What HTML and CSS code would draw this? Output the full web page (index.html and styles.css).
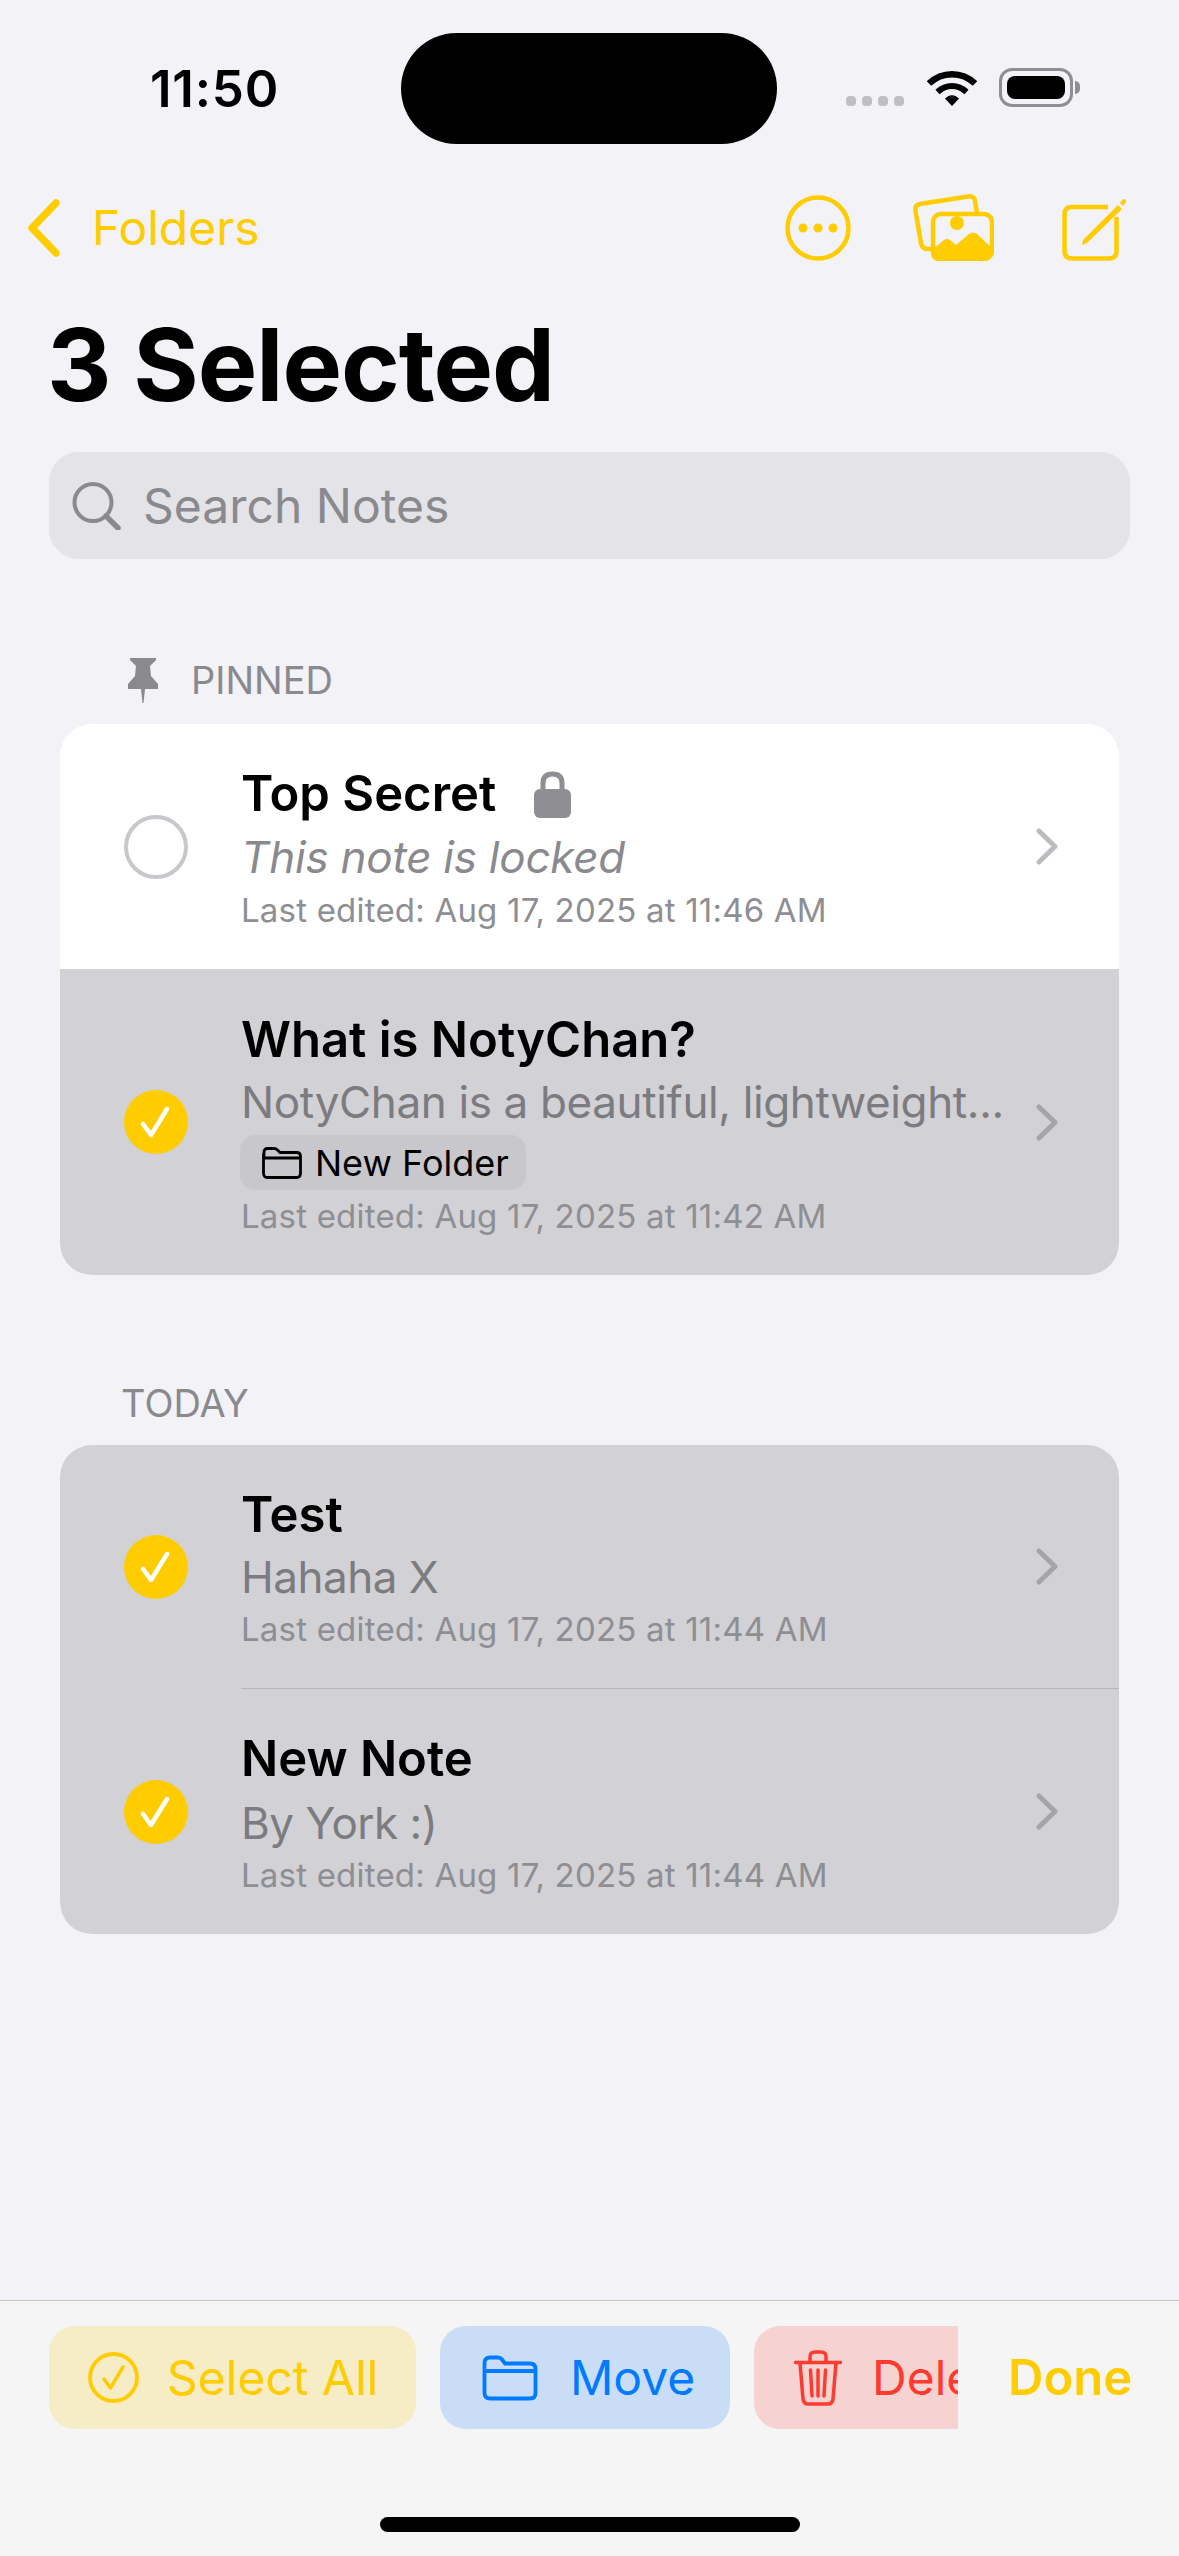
FILE: index.html
```html
<!DOCTYPE html>
<html lang="en">
<head>
  <meta charset="UTF-8" />
  <title>Notes – 3 Selected</title>
  <link rel="stylesheet" href="styles.css">
</head>
<body>
  <div class="screen">
    <div class="status">
      <div class="time">11:50</div>
      <div class="island"></div>
      <div class="status-icons">
        <div class="dots"><i></i><i></i><i></i><i></i></div>
        <svg class="wifi" viewBox="0 0 50 37"><path d="M2 14.5C15 2 35 2 48 14.5" fill="none" stroke="#000" stroke-width="6.5"/><path d="M10.5 23C19 15 31 15 39.5 23" fill="none" stroke="#000" stroke-width="6"/><path d="M18 29.5C22.5 25 27.5 25 32 29.5L25 37Z" fill="#000"/></svg>
        <div class="battery"><div class="battery-fill"></div></div>
        <div class="battery-cap"></div>
      </div>
    </div>

    <div class="nav">
      <svg class="back" viewBox="0 0 33 58"><path d="M29 4L5 29L29 54" fill="none" stroke="#ffcc00" stroke-width="7.5" stroke-linecap="round" stroke-linejoin="round"/></svg>
      <span class="back-label">Folders</span>
      <svg class="nav-more" viewBox="0 0 66 66"><circle cx="33" cy="33" r="30.5" fill="none" stroke="#ffcc00" stroke-width="4.5"/><circle cx="18" cy="33" r="4.5" fill="#ffcc00"/><circle cx="33" cy="33" r="4.5" fill="#ffcc00"/><circle cx="48" cy="33" r="4.5" fill="#ffcc00"/></svg>
      <svg class="nav-gallery" viewBox="0 0 81 67"><path d="M64 19L62 7Q61 1.500 55 2.500L7 10Q1.500 11 2.500 17L8 49Q9 55 15 55L18 55" fill="none" stroke="#ffcc00" stroke-width="4.5"/><rect x="20" y="20" width="59" height="45" rx="8" fill="none" stroke="#ffcc00" stroke-width="4.5"/><path d="M20 55L31 46Q34 44 37 46L43 51L56 40Q60 37 64 40L79 54V59Q79 67 71 67H26Q18 67 18 59Z" fill="#ffcc00"/><circle cx="44" cy="29" r="7" fill="#ffcc00"/></svg>
      <svg class="nav-compose" viewBox="0 0 64 63"><path d="M46 9H10Q2.500 9 2.500 16V53Q2.500 60.500 10 60.500H47Q54.500 60.500 54.500 53V19" fill="none" stroke="#ffcc00" stroke-width="4.500"/><path d="M21 42L56 7L60 11L25 45L20 47Z" fill="#ffcc00"/><path d="M58 5L60.500 1.500Q62 0.500 63.500 2L64 4L61 8Z" fill="#ffcc00"/></svg>
    </div>

    <h1 class="title">3 Selected</h1>

    <div class="search">
      <svg class="search-icon" viewBox="0 0 49 48"><circle cx="21" cy="20.500" r="18.500" fill="none" stroke="#8a8a8e" stroke-width="4"/><path d="M34 34L46 46" stroke="#8a8a8e" stroke-width="5.500" stroke-linecap="round"/></svg>
      <span class="search-text">Search Notes</span>
    </div>

    <div class="section-label section-pinned">
      <svg class="pin" viewBox="0 0 30 45"><path d="M2 0H28V2L22 8L23 18L30 26V31H17L15.500 45H14.500L13 31H0V26L7 18L8 8L2 2Z" fill="#8a8a8e"/></svg>
      <span>PINNED</span>
    </div>
    <div class="card">
      <div class="row">
        <div class="radio"></div>
        <div class="row-body">
          <div class="row-title">Top Secret
            <svg class="lock" viewBox="0 0 39 48"><path d="M10 21V13Q10 4 19.500 4Q29 4 29 13V21" fill="none" stroke="#8e8e93" stroke-width="5"/><rect x="1" y="19" width="37" height="29" rx="6" fill="#8e8e93"/></svg>
          </div>
          <div class="row-sub row-locked">This note is locked</div>
          <div class="row-date">Last edited: Aug 17, 2025 at 11:46 AM</div>
        </div>
        <svg class="chevron" viewBox="0 0 22 37"><path d="M3 3L19 18.500L3 34" fill="none" stroke="#bcbcc0" stroke-width="5" stroke-linecap="round" stroke-linejoin="round"/></svg>
      </div>
      <div class="row row-selected row-tall">
        <div class="radio radio-on"><svg viewBox="0 0 64 64"><path d="M19 34L27 45L43 19" fill="none" stroke="#fff" stroke-width="4.500" stroke-linecap="round" stroke-linejoin="round"/></svg></div>
        <div class="row-body">
          <div class="row-title">What is NotyChan?</div>
          <div class="row-sub row-sub-tight">NotyChan is a beautiful, lightweight...</div>
          <div class="tag">
            <svg class="tag-folder" viewBox="0 0 40 32"><path d="M2 8V5Q2 1.500 5.500 1.500H12Q14 1.500 15.500 3L18 5.500H34.500Q38.500 5.500 38.500 9.500V26Q38.500 30.500 34.500 30.500H5.500Q1.500 30.500 1.500 26V8ZM1.500 11H38.500" fill="none" stroke="#000" stroke-width="2.800"/></svg>
            <span>New Folder</span>
          </div>
          <div class="row-date">Last edited: Aug 17, 2025 at 11:42 AM</div>
        </div>
        <svg class="chevron" viewBox="0 0 22 37"><path d="M3 3L19 18.500L3 34" fill="none" stroke="#a5a5a9" stroke-width="5" stroke-linecap="round" stroke-linejoin="round"/></svg>
      </div>
    </div>

    <div class="section-label section-today"><span>TODAY</span></div>
    <div class="card">
      <div class="row row-selected row-short">
        <div class="radio radio-on"><svg viewBox="0 0 64 64"><path d="M19 34L27 45L43 19" fill="none" stroke="#fff" stroke-width="4.500" stroke-linecap="round" stroke-linejoin="round"/></svg></div>
        <div class="row-body">
          <div class="row-title">Test</div>
          <div class="row-sub">Hahaha X</div>
          <div class="row-date">Last edited: Aug 17, 2025 at 11:44 AM</div>
        </div>
        <svg class="chevron" viewBox="0 0 22 37"><path d="M3 3L19 18.500L3 34" fill="none" stroke="#a5a5a9" stroke-width="5" stroke-linecap="round" stroke-linejoin="round"/></svg>
      </div>
      <div class="row-divider"></div>
      <div class="row row-selected">
        <div class="radio radio-on"><svg viewBox="0 0 64 64"><path d="M19 34L27 45L43 19" fill="none" stroke="#fff" stroke-width="4.500" stroke-linecap="round" stroke-linejoin="round"/></svg></div>
        <div class="row-body">
          <div class="row-title">New Note</div>
          <div class="row-sub">By York :)</div>
          <div class="row-date">Last edited: Aug 17, 2025 at 11:44 AM</div>
        </div>
        <svg class="chevron" viewBox="0 0 22 37"><path d="M3 3L19 18.500L3 34" fill="none" stroke="#a5a5a9" stroke-width="5" stroke-linecap="round" stroke-linejoin="round"/></svg>
      </div>
    </div>

    <div class="toolbar">
      <div class="actions">
        <div class="action action-yellow">
          <svg class="action-check" viewBox="0 0 51 51"><circle cx="25.500" cy="25.500" r="23.500" fill="none" stroke="#ffcc00" stroke-width="3.800"/><path d="M16 27L22.500 36L35 15" fill="none" stroke="#ffcc00" stroke-width="3.500" stroke-linecap="round" stroke-linejoin="round"/></svg>
          <span>Select All</span>
        </div>
        <div class="action action-blue">
          <svg class="action-folder" viewBox="0 0 56 46"><path d="M2.500 12V8Q2.500 2.500 8 2.500H16Q18.500 2.500 20 4.500L23 8.500H48Q53.500 8.500 53.500 14V38Q53.500 43.500 48 43.500H8Q2.500 43.500 2.500 38V12ZM2.500 16H53.500" fill="none" stroke="#007aff" stroke-width="3.800"/></svg>
          <span>Move</span>
        </div>
        <div class="action action-red">
          <svg class="action-trash" viewBox="0 0 48 56"><path d="M1.500 12.500H46.500M16 12V7Q16 2 21 2H27Q32 2 32 7V12M6 13L9 49Q9.500 54 14.500 54H33.500Q38.500 54 39 49L42 13M16.500 20L18 46M24 20V46M31.500 20L30 46" fill="none" stroke="#ff3b30" stroke-width="3.500" stroke-linecap="round"/></svg>
          <span>Delete</span>
        </div>
      </div>
      <span class="done">Done</span>
    </div>
    <div class="home-bar"><div class="home-indicator"></div></div>
  </div>
</body>
</html>
```

FILE: styles.css
```css
html, body {
  margin: 0;
  padding: 0;
}
body {
  font-family: Inter, "Liberation Sans", sans-serif;
  background-color: #f2f2f7;
  color: #000;
}
.screen {
  width: 1179px;
  height: 2556px;
  overflow: hidden;
  display: flex;
  flex-direction: column;
}

/* status bar */
.status {
  display: flex;
  padding-top: 33px;
  height: 111px;
}
.time {
  width: 251px;
  margin-left: 150px;
  font-size: 51px;
  font-weight: 600;
  line-height: 111px;
  letter-spacing: 0.8px;
}
.island {
  width: 376px;
  height: 111px;
  border-radius: 56px;
  background: #000;
}
.status-icons {
  display: flex;
  margin-left: 69px;
  padding-top: 35px;
  align-items: flex-start;
}
.dots {
  display: flex;
  gap: 6px;
  margin-top: 28px;
}
.dots i {
  width: 10px;
  height: 10px;
  border-radius: 4px;
  background: #c0c0c4;
}
.wifi {
  width: 50px;
  height: 37px;
  margin-left: 23px;
  margin-top: 1px;
}
.battery {
  box-sizing: border-box;
  width: 74px;
  height: 39px;
  margin-left: 22px;
  padding: 5px;
  border: 3px solid #8e8e93;
  border-radius: 13px;
}
.battery-fill {
  height: 100%;
  background: #000;
  border-radius: 8px;
}
.battery-cap {
  width: 5px;
  height: 13px;
  margin: 13px 0 0 2px;
  background: #8e8e93;
  border-radius: 0 6px 6px 0;
}

/* nav */
.nav {
  display: flex;
  align-items: center;
  height: 67px;
  margin-top: 50px;
  padding-left: 27px;
}
.back {
  width: 33px;
  height: 58px;
}
.back-label {
  margin-left: 32px;
  width: 693px;
  color: #ffcc00;
  font-size: 48px;
}
.nav-more {
  width: 66px;
  height: 66px;
}
.nav-gallery {
  width: 81px;
  height: 67px;
  margin-left: 62px;
}
.nav-compose {
  width: 64px;
  height: 63px;
  margin-left: 68px;
  margin-top: 4px;
}

.title {
  margin: 49px 0 0 47px;
  font-size: 100px;
  font-weight: 700;
  line-height: 110px;
  letter-spacing: -1px;
}

/* search */
.search {
  display: flex;
  align-items: center;
  width: 1081px;
  height: 107px;
  margin: 32px 0 0 49px;
  background: #e3e3e8;
  border-radius: 30px;
}
.search-icon {
  width: 49px;
  height: 48px;
  margin-left: 23px;
}
.search-text {
  margin-left: 22px;
  color: #8a8a8e;
  font-size: 48px;
}

/* sections */
.section-label {
  display: flex;
  align-items: center;
  color: #8a8a8e;
  font-size: 38px;
  height: 50px;
}
.section-pinned {
  margin: 96px 0 0 128px;
  gap: 33px;
}
.section-today {
  margin: 103px 0 0 121px;
}
.pin {
  width: 30px;
  height: 45px;
}
.section-pinned + .card {
  margin-top: 19px;
}
.card {
  margin: 17px 60px 0;
  background: #fff;
  border-radius: 32px;
  overflow: hidden;
}

/* rows */
.row {
  display: flex;
  align-items: center;
  height: 245px;
}
.row-short {
  height: 243px;
}
.row-tall {
  height: 306px;
}
.row-selected {
  background: #d1d1d6;
}
.row-divider {
  height: 1px;
  background: linear-gradient(to right, #d1d1d6 181px, #b4b4b9 181px);
}
.radio {
  box-sizing: border-box;
  flex: none;
  width: 64px;
  height: 64px;
  margin-left: 64px;
  border: 4px solid #c7c7cc;
  border-radius: 50%;
}
.radio-on {
  border: none;
  background: #ffcc00;
}
.radio-on svg {
  display: block;
}
.row-body {
  flex: 1;
  margin-left: 53px;
  min-width: 0;
  align-self: stretch;
  padding-top: 40px;
}
.row-tall .row-body {
  padding-top: 41px;
}
.row-title {
  display: flex;
  align-items: center;
  font-size: 49px;
  font-weight: 600;
  line-height: 60px;
}
.lock {
  width: 39px;
  height: 48px;
  margin-left: 37px;
}
.row-sub {
  margin-top: 2px;
  color: #7c7c80;
  font-size: 44px;
  letter-spacing: -0.5px;
  line-height: 64px;
  white-space: nowrap;
}
.row-short .row-sub {
  margin-top: 0;
}
.row-sub-tight {
  margin-top: 1px;
  letter-spacing: -0.37px;
  line-height: 62px;
}
.row-locked {
  margin: 1px 0;
  color: #8a8a8e;
  font-style: italic;
  letter-spacing: -0.25px;
}
.row-date {
  color: #8e8e93;
  font-size: 33px;
  letter-spacing: 0.2px;
  line-height: 40px;
  white-space: nowrap;
}
.tag {
  display: flex;
  align-items: center;
  box-sizing: border-box;
  height: 55px;
  width: 286px;
  margin: 2px 0 6px -1px;
  padding-left: 22px;
  background: #c7c7cc;
  border-radius: 15px;
  font-size: 36px;
}
.tag-folder {
  width: 40px;
  height: 32px;
  margin-right: 13px;
}
.chevron {
  flex: none;
  width: 22px;
  height: 37px;
  margin: 0 61px 0 30px;
}

/* toolbar */
.toolbar {
  display: flex;
  align-items: center;
  box-sizing: border-box;
  margin-top: auto;
  height: 129px;
  padding: 25px 0 0 49px;
  background: #f5f5f5;
  border-top: 1px solid #c6c6c8;
  font-size: 48px;
}
.actions {
  display: flex;
  gap: 24px;
  width: 909px;
  overflow: hidden;
}
.action {
  display: flex;
  flex: none;
  align-items: center;
  box-sizing: border-box;
  height: 103px;
  border-radius: 26px;
}
.action-yellow {
  width: 367px;
  padding-left: 39px;
  gap: 28px;
  color: #ffcc00;
  background: #f6ecc5;
}
.action-blue {
  width: 290px;
  padding-left: 42px;
  gap: 32px;
  color: #007aff;
  background: #c9def6;
}
.action-red {
  width: 320px;
  padding-left: 40px;
  gap: 30px;
  color: #ff3b30;
  background: #f6d3d1;
}
.action-check {
  width: 51px;
  height: 51px;
}
.action-folder {
  width: 56px;
  height: 46px;
}
.action-trash {
  width: 48px;
  height: 56px;
}
.done {
  margin-left: 50px;
  color: #ffcc00;
  font-size: 49px;
  font-weight: 600;
}
.home-bar {
  display: flex;
  justify-content: center;
  height: 127px;
  background: #f5f5f5;
}
.home-indicator {
  width: 420px;
  height: 15px;
  margin-top: 88px;
  border-radius: 8px;
  background: #000;
}
```
